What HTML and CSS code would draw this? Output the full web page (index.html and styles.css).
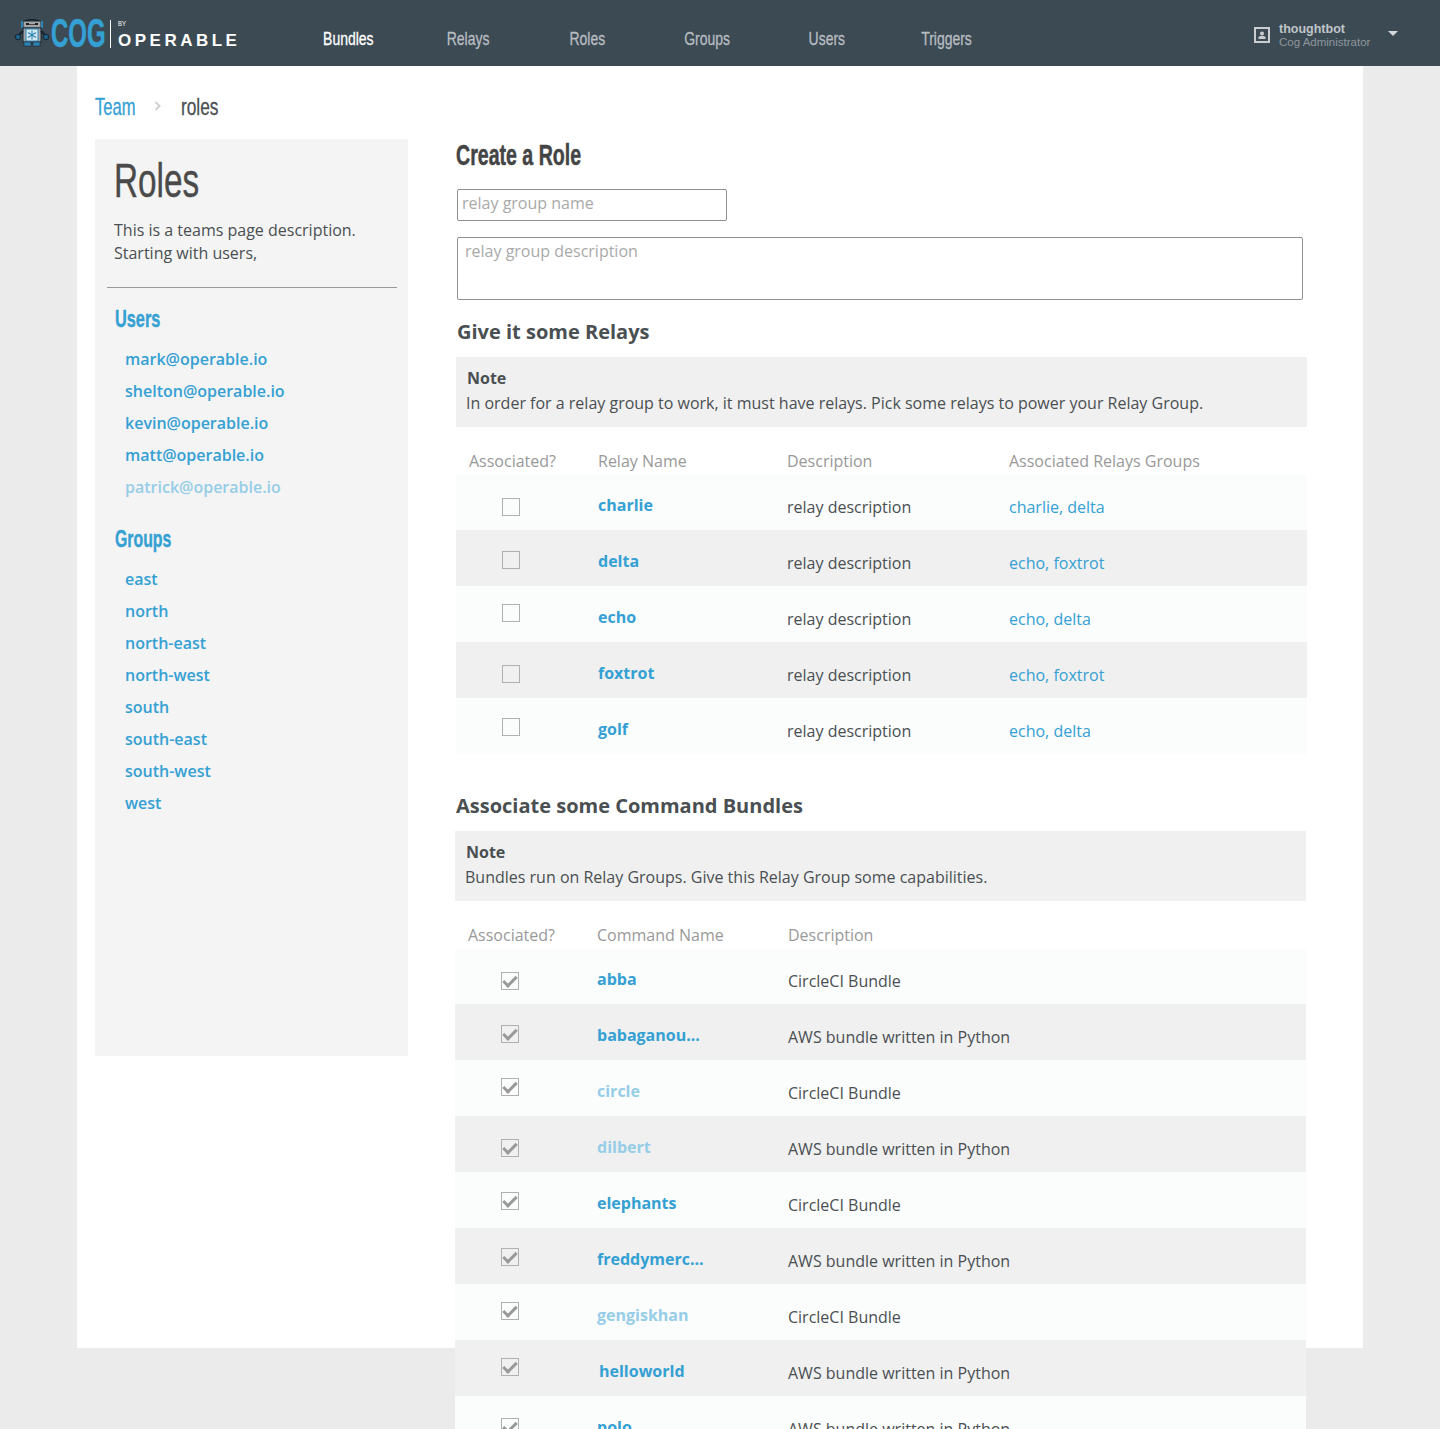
FILE: index.html
```html
<!DOCTYPE html>
<html lang="en">
<head>
    <meta charset="utf-8">
    <title>Roles</title>
    <link rel="stylesheet" href="styles.css">
</head>
<body>
    <header class="topbar">
        <a class="logo" href="#">
            <svg class="logo__robot" width="36" height="28" viewBox="0 0 36 28">
                <path d="M11 2 Q18 -1 25 2" fill="none" stroke="#16242e" stroke-width="1.500"/>
                <rect x="9" y="2" width="18" height="7" rx="1" fill="#a3a5a6" stroke="#16242e"/>
                <rect x="12" y="4" width="3" height="2" fill="#222222"/>
                <rect x="15" y="5" width="6" height="1" fill="#444444"/>
                <rect x="21" y="4" width="3" height="2" fill="#222222"/>
                <rect x="7" y="2" width="2" height="7" fill="#2e86b5"/>
                <rect x="27" y="2" width="2" height="7" fill="#2e86b5"/>
                <rect x="9" y="9" width="18" height="14" fill="#a3a5a6" stroke="#16242e"/>
                <rect x="12" y="10" width="12" height="12" fill="#d5e6ef" stroke="#2e86b5"/>
                <path d="M18 11.500v9M14 13.500l8 5M22 13.500l-8 5" stroke="#2e86b5" stroke-width="1.100"/>
                <path d="M9 12L5 16M27 12l4 4" stroke="#16242e" stroke-width="2"/>
                <circle cx="4" cy="18" r="2.800" fill="#1d5f86" stroke="#16242e"/>
                <circle cx="32" cy="18" r="2.800" fill="#1d5f86" stroke="#16242e"/>
                <rect x="10" y="23" width="7" height="4" fill="#2e86b5" stroke="#16242e" stroke-width=".6"/>
                <rect x="19" y="23" width="7" height="4" fill="#2e86b5" stroke="#16242e" stroke-width=".6"/>
            </svg>
            <span class="logo__cog">COG</span>
            <span class="logo__sep"></span>
            <span class="logo__by">
                <small>BY</small>
                <b>OPERABLE</b>
            </span>
        </a>
        <nav class="nav">
            <a class="nav__item nav__item--active" href="#"><span>Bundles</span></a>
            <a class="nav__item" href="#"><span>Relays</span></a>
            <a class="nav__item" href="#"><span>Roles</span></a>
            <a class="nav__item" href="#"><span>Groups</span></a>
            <a class="nav__item" href="#"><span>Users</span></a>
            <a class="nav__item" href="#"><span>Triggers</span></a>
        </nav>
        <div class="account">
            <svg width="16" height="16" viewBox="0 0 16 16">
                <rect x="1" y="1" width="14" height="14" fill="none" stroke="#c9cdd0" stroke-width="2"/>
                <circle cx="8" cy="6.500" r="2" fill="#c9cdd0"/>
                <path d="M4.500 12v-1.500q0-1.500 2-1.500h3q2 0 2 1.500V12z" fill="#c9cdd0"/>
            </svg>
            <div class="account__text">
                <div class="account__name">thoughtbot</div>
                <div class="account__role">Cog Administrator</div>
            </div>
            <span class="account__caret"></span>
        </div>
    </header>

    <div class="page">
        <div class="crumbs">
            <a class="crumbs__team" href="#">Team</a>
            <svg class="crumbs__arrow" width="8" height="10" viewBox="0 0 8 10">
                <path d="M1.500 1l4 4-4 4" fill="none" stroke="#d0d0d0" stroke-width="2"/>
            </svg>
            <span class="crumbs__here">roles</span>
        </div>

        <div class="columns">
            <aside class="sidebar">
                <h1>Roles</h1>
                <p>This is a teams page description. Starting with users,</p>
                <hr>
                <h3 class="sidebar__users">Users</h3>
                <ul>
                    <li><a href="#">mark@operable.io</a></li>
                    <li><a href="#">shelton@operable.io</a></li>
                    <li><a href="#">kevin@operable.io</a></li>
                    <li><a href="#">matt@operable.io</a></li>
                    <li><a class="faded" href="#">patrick@operable.io</a></li>
                </ul>
                <h3 class="sidebar__groups">Groups</h3>
                <ul>
                    <li><a href="#">east</a></li>
                    <li><a href="#">north</a></li>
                    <li><a href="#">north-east</a></li>
                    <li><a href="#">north-west</a></li>
                    <li><a href="#">south</a></li>
                    <li><a href="#">south-east</a></li>
                    <li><a href="#">south-west</a></li>
                    <li><a href="#">west</a></li>
                </ul>
            </aside>

            <main class="content">
                <h2>Create a Role</h2>
                <input class="field" type="text" placeholder="relay group name">
                <textarea class="field field--area" placeholder="relay group description"></textarea>

                <section class="relays">
                    <h4>Give it some Relays</h4>
                    <div class="note">
                        <strong>Note</strong>
                        <span>In order for a relay group to work, it must have relays. Pick some relays to power your Relay Group.</span>
                    </div>
                    <div class="table">
                        <div class="row row--head">
                            <div>Associated?</div><div>Relay Name</div><div>Description</div><div>Associated Relays Groups</div>
                        </div>
                        <div class="row">
                            <span class="cb cb-23"></span><a class="name" href="#">charlie</a><div>relay description</div><a href="#">charlie, delta</a>
                        </div>
                        <div class="row">
                            <span class="cb cb-21"></span><a class="name" href="#">delta</a><div>relay description</div><a href="#">echo, foxtrot</a>
                        </div>
                        <div class="row">
                            <span class="cb cb-18"></span><a class="name" href="#">echo</a><div>relay description</div><a href="#">echo, delta</a>
                        </div>
                        <div class="row">
                            <span class="cb cb-23"></span><a class="name" href="#">foxtrot</a><div>relay description</div><a href="#">echo, foxtrot</a>
                        </div>
                        <div class="row">
                            <span class="cb cb-20"></span><a class="name" href="#">golf</a><div>relay description</div><a href="#">echo, delta</a>
                        </div>
                    </div>
                </section>

                <section class="bundles">
                    <h4>Associate some Command Bundles</h4>
                    <div class="note">
                        <strong>Note</strong>
                        <span>Bundles run on Relay Groups. Give this Relay Group some capabilities.</span>
                    </div>
                    <div class="table">
                        <div class="row row--head">
                            <div>Associated?</div><div>Command Name</div><div>Description</div>
                        </div>
                        <div class="row">
                            <span class="cb cb-23 cb--on"></span><a class="name" href="#">abba</a><div>CircleCI Bundle</div>
                        </div>
                        <div class="row">
                            <span class="cb cb-21 cb--on"></span><a class="name" href="#">babaganou...</a><div>AWS bundle written in Python</div>
                        </div>
                        <div class="row">
                            <span class="cb cb-18 cb--on"></span><a class="name faded" href="#">circle</a><div>CircleCI Bundle</div>
                        </div>
                        <div class="row">
                            <span class="cb cb-23 cb--on"></span><a class="name faded" href="#">dilbert</a><div>AWS bundle written in Python</div>
                        </div>
                        <div class="row">
                            <span class="cb cb-20 cb--on"></span><a class="name" href="#">elephants</a><div>CircleCI Bundle</div>
                        </div>
                        <div class="row">
                            <span class="cb cb-20 cb--on"></span><a class="name" href="#">freddymerc...</a><div>AWS bundle written in Python</div>
                        </div>
                        <div class="row">
                            <span class="cb cb-18 cb--on"></span><a class="name faded" href="#">gengiskhan</a><div>CircleCI Bundle</div>
                        </div>
                        <div class="row">
                            <span class="cb cb-18 cb--on"></span><a class="name name--nudge" href="#">helloworld</a><div>AWS bundle written in Python</div>
                        </div>
                        <div class="row">
                            <span class="cb cb-22 cb--on"></span><a class="name" href="#">polo</a><div>AWS bundle written in Python</div>
                        </div>
                    </div>
                </section>
            </main>
        </div>
    </div>
</body>
</html>
```

FILE: styles.css
```css
/* Base */
html,
body {
    height: 1429px;
    overflow: hidden;
}

body {
    font-family: "Open Sans", sans-serif;
    font-size: 16px;
    color: #4a4f52;
    background-color: #ebebeb;
    margin: 0;
    padding: 0;
}

a {
    color: #34a0d3;
    text-decoration: none;
}

a.faded {
    color: #96cde7;
}

/* Narrowed headline type, squeezed from the left edge */
.logo__cog,
.logo__by small,
.nav__item span,
.crumbs__team,
.crumbs__here,
.sidebar h1,
.sidebar h3,
.content h2 {
    font-family: "Liberation Sans", sans-serif;
    white-space: nowrap;
    transform-origin: left center;
}

/* Top bar */
.topbar {
    display: flex;
    align-items: center;
    height: 66px;
    background-color: #3c4a54;
}

.logo {
    display: flex;
    align-items: center;
    width: 288px;
    padding: 3px 0 0 14px;
    box-sizing: border-box;
    flex: none;
}

.logo__robot {
    flex: none;
    margin-top: -3px;
}

.logo__cog {
    width: 54px;
    margin: -4px 0 0 1px;
    font-weight: bold;
    font-size: 40px;
    line-height: 40px;
    color: #34a0d3;
    transform: scaleX(.6);
    -webkit-text-stroke: .5px;
}

.logo__sep {
    width: 1px;
    height: 28px;
    margin: -2px 7px 0 5px;
    background-color: #ffffff;
    flex: none;
}

.logo__by {
    display: flex;
    flex-direction: column;
    color: #ffffff;
}

.logo__by small {
    font-size: 8px;
    line-height: 9px;
    margin-bottom: 3px;
    transform: scaleX(.75);
}

.logo__by b {
    font-family: "Liberation Sans", sans-serif;
    font-size: 17px;
    line-height: 19px;
    font-weight: bold;
    letter-spacing: 3.500px;
    white-space: nowrap;
}

.nav {
    display: flex;
    padding: 9px 0 0 .8px;
}

.nav__item {
    width: 119.600px;
    text-align: center;
    font-size: 19px;
    color: #b8bdc1;
}

.nav__item span {
    display: inline-block;
    transform: scaleX(.735);
    transform-origin: center;
    -webkit-text-stroke: .3px;
}

.nav__item--active {
    color: #ffffff;
}

.account {
    display: flex;
    align-items: center;
    margin-left: auto;
    margin-right: 42px;
    padding-top: 4px;
    font-family: "Liberation Sans", sans-serif;
}

.account__text {
    margin-left: 9px;
    width: 109px;
}

.account__name {
    font-size: 12.500px;
    line-height: 14px;
    font-weight: bold;
    color: #c0c5c8;
}

.account__role {
    font-size: 11.500px;
    line-height: 13px;
    color: #8e979d;
}

.account__caret {
    width: 0;
    height: 0;
    margin-bottom: 4px;
    border-left: 5px solid transparent;
    border-right: 5px solid transparent;
    border-top: 5px solid #d5d8da;
}

/* Page */
.page {
    width: 1286px;
    height: 1282px;
    margin: 0 auto;
    background-color: #ffffff;
}

.crumbs {
    display: flex;
    align-items: center;
    box-sizing: border-box;
    height: 73px;
    padding: 9px 0 0 18px;
    font-size: 24px;
}

.crumbs__team {
    width: 40px;
    transform: scaleX(.69);
    -webkit-text-stroke: .3px;
}

.crumbs__here {
    transform: scaleX(.72);
    -webkit-text-stroke: .3px;
}

.crumbs__arrow {
    margin: 0 19px 2px 19px;
}

.columns {
    display: flex;
    align-items: flex-start;
    padding-left: 18px;
}

/* Sidebar */
.sidebar {
    width: 313px;
    height: 917px;
    flex: none;
    background-color: #f4f4f4;
}

.sidebar h1 {
    font-weight: normal;
    font-size: 49px;
    line-height: 60px;
    color: #4a4a4a;
    margin: 11px 0 0 19px;
    transform: scaleX(.68);
    -webkit-text-stroke: .4px;
}

.sidebar p {
    width: 260px;
    line-height: 23px;
    margin: 9px 0 0 19px;
}

.sidebar hr {
    width: 290px;
    height: 1px;
    border: none;
    background-color: #999999;
    margin: 22px 0 0 12px;
}

.sidebar h3 {
    font-size: 24px;
    line-height: 30px;
    color: #34a0d3;
    margin: 16px 0 0 20px;
    -webkit-text-stroke: .4px;
}

.sidebar__users {
    transform: scaleX(.68);
}

.sidebar__groups {
    transform: scaleX(.66);
}

.sidebar ul + h3 {
    margin-top: 21px;
}

.sidebar ul {
    list-style: none;
    margin: 9px 0 0 30px;
    padding: 0;
}

.sidebar li {
    line-height: 32px;
    font-weight: 600;
}

/* Form column */
.content {
    width: 852px;
    margin-left: 47px;
}

.content h2 {
    font-size: 29px;
    line-height: 32px;
    color: #444444;
    margin: 0 0 18px 1px;
    transform: scaleX(.675);
    -webkit-text-stroke: .5px;
}

.field {
    display: block;
    box-sizing: border-box;
    width: 270px;
    height: 32px;
    margin-left: 2px;
    padding: 0 4px 4px;
    font-family: "Open Sans", sans-serif;
    font-size: 16px;
    border: 1px solid #8f8f8f;
    border-radius: 2px;
    background-color: #ffffff;
    outline: none;
}

.field::placeholder {
    color: #a9a9a9;
    opacity: 1;
}

.field--area {
    width: 846px;
    height: 63px;
    margin-top: 16px;
    padding: 2px 7px;
    resize: none;
}

.content h4 {
    font-size: 20px;
    line-height: 28px;
    font-weight: 700;
    color: #4a4f52;
    margin: 0 0 0 1px;
}

.relays {
    width: 851px;
    margin: 18px 0 0 1px;
}

.bundles {
    width: 851px;
    margin-top: 38px;
}

.note {
    display: flex;
    flex-direction: column;
    box-sizing: border-box;
    height: 70px;
    margin-top: 11px;
    padding: 9px 10px;
    line-height: 25px;
    background-color: #f0f0f0;
}

.note strong {
    margin-left: 1px;
    font-weight: 700;
}

/* Tables */
.row {
    display: grid;
    grid-template-columns: 142px 189px 222px 1fr;
    height: 56px;
    padding-top: 19px;
    box-sizing: border-box;
    line-height: 28px;
    background-color: #f0f0f0;
}

.bundles .row {
    grid-template-columns: 142px 191px 1fr;
}

.row:nth-child(even) {
    background-color: #fbfcfc;
}

.row:nth-child(2) {
    height: 55px;
}

.row--head {
    height: 48px;
    padding-top: 20px;
    color: #999999;
    background-color: #ffffff;
}

.row--head > :first-child {
    padding-left: 13px;
}

.name {
    margin-top: -2px;
    font-weight: 700;
}

.row:nth-child(2) > div,
.row:nth-child(2) > a {
    margin-top: -1px;
}

.row:nth-child(2) > .name {
    margin-top: -3px;
}

.name--nudge {
    margin-left: 2px;
}

/* Checkboxes */
.cb {
    display: block;
    box-sizing: border-box;
    width: 18px;
    height: 18px;
    margin-left: 46px;
    border: 1px solid #b0b0b0;
}

.cb-18 {
    margin-top: -1px;
}

.cb-20 {
    margin-top: 1px;
}

.cb-21 {
    margin-top: 2px;
}

.cb-22 {
    margin-top: 3px;
}

.cb-23 {
    margin-top: 4px;
}

.cb--on {
    display: flex;
    align-items: center;
    justify-content: center;
}

.cb--on::after {
    content: "";
    width: 11px;
    height: 5px;
    margin-top: -3px;
    border-left: 3px solid #999999;
    border-bottom: 3px solid #999999;
    transform: rotate(-45deg);
}
```
